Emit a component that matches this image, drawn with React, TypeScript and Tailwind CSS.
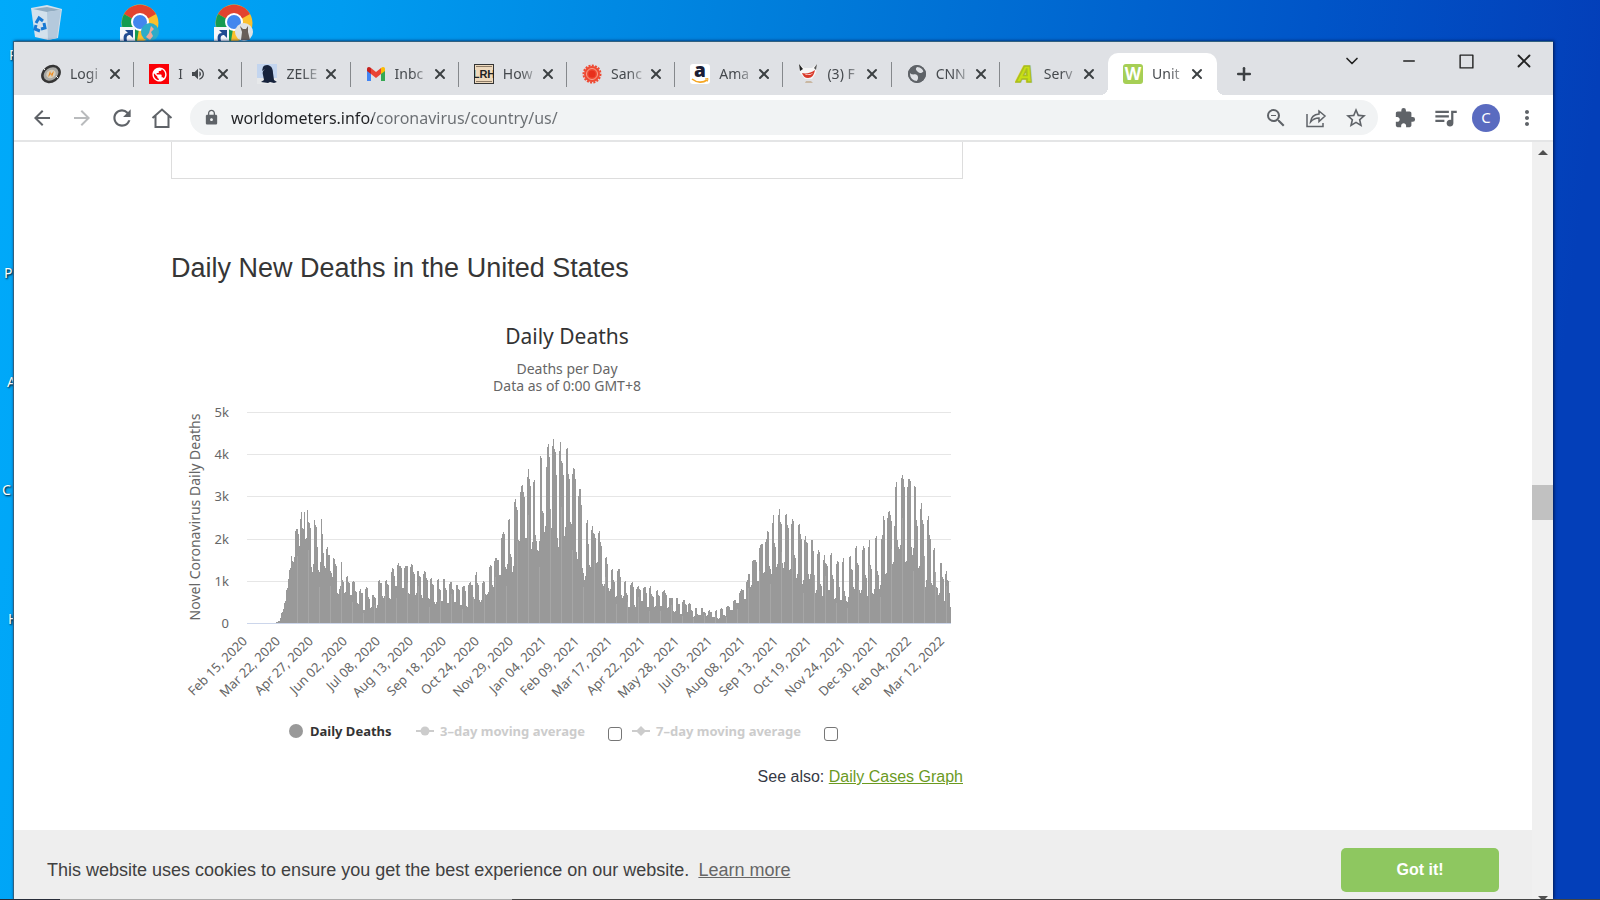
import React from "react";
import clsx from "clsx";
import {
  MdArrowBack,
  MdArrowForward,
  MdExtension,
  MdLock,
  MdMoreVert,
  MdPublic,
  MdQueueMusic,
  MdRefresh,
  MdStarBorder,
  MdVolumeUp,
  MdZoomOut,
} from "react-icons/md";
import { ChevronDown, Minus, Plus, Square, X } from "lucide-react";

// [position on the time axis, thousands of deaths]; the axis runs from 0 to 2112
const SERIES: [number, number][] = [
  [0, 0], [83, 0], [88, 0.03], [97, 0.04], [99, 0.12], [105, 0.26], [110, 0.34], [114, 0.5], [119, 0.8], [124, 1.05],
  [128, 1.28], [131, 1.3], [134, 1.62], [138, 1.45], [141, 1.5], [144, 2.18], [150, 2.23], [154, 2.1], [157, 1.82], [161, 2.5],
  [164, 2.65], [168, 2.2], [172, 2.63], [176, 1.95], [181, 2.68], [185, 2.38], [191, 2.25], [195, 1.2], [199, 1.4], [202, 2.45],
  [207, 2.3], [211, 1.8], [216, 1.2], [219, 1.35], [222, 2.5], [226, 2.1], [229, 1.65], [235, 1.3], [240, 1.8], [247, 1.6],
  [251, 1.2], [256, 1.1], [259, 1.53], [266, 1.4], [272, 0.68], [278, 0.8], [283, 1.45], [287, 1.0], [293, 0.7], [300, 1.12],
  [306, 0.95], [312, 0.65], [319, 1], [327, 0.75], [334, 0.45], [339, 0.8], [346, 0.7], [350, 0.27], [358, 0.85], [365, 0.6],
  [370, 0.35], [377, 0.68], [384, 0.6], [388, 0.35], [395, 1.02], [402, 0.95], [409, 0.6], [417, 1.02], [425, 0.9], [429, 0.55],
  [436, 1.3], [443, 1.1], [447, 0.85], [453, 1.42], [461, 1.35], [468, 0.8], [474, 1.35], [481, 1.35], [486, 0.65], [493, 1.4],
  [500, 1.2], [506, 0.65], [512, 1.25], [520, 1.1], [526, 0.6], [532, 1.23], [540, 1.05], [546, 0.55], [551, 1.07], [559, 0.9],
  [565, 0.45], [573, 1.05], [578, 0.8], [585, 0.5], [590, 1.07], [597, 0.8], [603, 0.45], [610, 0.98], [617, 0.8], [624, 0.48],
  [628, 0.9], [636, 0.8], [641, 0.4], [650, 0.9], [656, 0.75], [660, 0.35], [668, 0.97], [676, 0.9], [681, 0.55], [688, 1.2],
  [694, 0.9], [700, 0.5], [709, 1], [719, 0.65], [731, 1.38], [739, 0.85], [745, 1.55], [753, 1.5], [759, 1.1], [767, 2.15],
  [772, 2.1], [777, 1.25], [786, 2.5], [791, 1.6], [797, 1.2], [803, 2.95], [809, 2.75], [816, 1.9], [824, 3.28], [829, 3.1],
  [837, 1.95], [844, 3.65], [848, 3.4], [853, 1.75], [861, 3.45], [867, 1.95], [874, 1.7], [881, 4.05], [886, 2.65], [893, 2.15],
  [898, 3.7], [904, 4.25], [908, 3.9], [912, 2.15], [918, 4.38], [924, 4.1], [928, 3.5], [934, 1.8], [939, 4.32], [945, 3.8],
  [949, 3.5], [952, 2.05], [959, 4.2], [965, 3.5], [972, 2.3], [979, 3.68], [986, 3.4], [990, 1.45], [998, 3.22], [1003, 2.8],
  [1007, 1.2], [1013, 1], [1020, 2.48], [1025, 1.85], [1029, 1.3], [1036, 2.3], [1042, 2.1], [1049, 1.4], [1056, 2.2], [1061, 1.9],
  [1068, 0.85], [1077, 1.58], [1081, 1.4], [1087, 0.75], [1095, 1.3], [1101, 1], [1106, 0.6], [1115, 1.3], [1120, 1.1], [1126, 0.6],
  [1134, 1], [1139, 0.7], [1146, 0.35], [1154, 0.97], [1160, 0.85], [1164, 0.37], [1172, 0.88], [1179, 0.8], [1185, 0.5], [1193, 0.87],
  [1198, 0.7], [1203, 0.35], [1210, 0.88], [1216, 0.65], [1223, 0.37], [1230, 0.8], [1236, 0.65], [1242, 0.38], [1250, 0.78], [1256, 0.7],
  [1262, 0.35], [1269, 0.6], [1276, 0.6], [1282, 0.25], [1289, 0.6], [1296, 0.45], [1302, 0.2], [1310, 0.55], [1316, 0.45], [1321, 0.27],
  [1327, 0.47], [1334, 0.3], [1339, 0.15], [1347, 0.37], [1354, 0.2], [1359, 0.18], [1365, 0.37], [1372, 0.25], [1379, 0.17], [1386, 0.3],
  [1392, 0.27], [1398, 0.13], [1408, 0.3], [1414, 0.1], [1424, 0.35], [1434, 0.17], [1442, 0.4], [1454, 0.3], [1462, 0.55], [1474, 0.47],
  [1479, 0.75], [1485, 0.8], [1494, 0.55], [1499, 1], [1505, 1.18], [1511, 0.85], [1517, 1.5], [1525, 1.5], [1533, 0.95], [1539, 1.85],
  [1546, 1.87], [1550, 1.15], [1558, 2], [1563, 2.2], [1568, 1.3], [1573, 1.15], [1579, 2.55], [1585, 1.8], [1589, 1.3], [1597, 2.7],
  [1603, 2.35], [1609, 1.3], [1616, 2.6], [1623, 2.3], [1628, 1.2], [1637, 2.5], [1642, 1.6], [1649, 1.05], [1655, 2.38], [1661, 2.1],
  [1666, 0.93], [1675, 2.05], [1681, 1.9], [1687, 1.05], [1694, 2], [1699, 1.7], [1705, 0.7], [1715, 1.75], [1721, 0.9], [1726, 0.65],
  [1732, 1.6], [1738, 1.4], [1746, 0.75], [1752, 1.7], [1757, 1.1], [1763, 0.55], [1772, 1.5], [1777, 0.85], [1782, 0.5], [1789, 1.55],
  [1795, 0.65], [1801, 0.5], [1808, 1.6], [1816, 1.25], [1822, 0.8], [1826, 1.85], [1833, 1.4], [1840, 0.7], [1850, 1.85], [1856, 1.1],
  [1861, 0.65], [1867, 1.97], [1872, 1.3], [1878, 0.65], [1887, 2.1], [1893, 1.15], [1898, 0.8], [1904, 2.05], [1910, 2.55], [1916, 1.1],
  [1925, 2.67], [1930, 2.55], [1937, 1.35], [1942, 2.3], [1948, 3.35], [1953, 1.8], [1959, 1.75], [1964, 3.52], [1970, 3.4], [1976, 1.35],
  [1984, 3.42], [1989, 3.42], [1996, 1.6], [2003, 3.3], [2009, 2.4], [2015, 1.25], [2023, 2.85], [2028, 2.4], [2035, 0.85], [2043, 2.55],
  [2049, 2.05], [2055, 0.85], [2061, 1.8], [2068, 0.85], [2075, 0.65], [2081, 1.45], [2089, 1.05], [2094, 0.45], [2096, 1.25], [2104, 1],
  [2107, 0.7], [2112, 0.35],
];

const DATES = [
  "Feb 15, 2020", "Mar 22, 2020", "Apr 27, 2020", "Jun 02, 2020", "Jul 08, 2020", "Aug 13, 2020",
  "Sep 18, 2020", "Oct 24, 2020", "Nov 29, 2020", "Jan 04, 2021", "Feb 09, 2021", "Mar 17, 2021",
  "Apr 22, 2021", "May 28, 2021", "Jul 03, 2021", "Aug 08, 2021", "Sep 13, 2021", "Oct 19, 2021",
  "Nov 24, 2021", "Dec 30, 2021", "Feb 04, 2022", "Mar 12, 2022",
];

const PLOT_LEFT = 76;
const PLOT_WIDTH = 704;
const BASE = 219;
const PLOT_HEIGHT = 211;

const toPx = (k: number) => Math.round((k * PLOT_HEIGHT) / 5);

function valueAt(t: number) {
  let i = 0;
  while (i < SERIES.length - 2 && SERIES[i + 1][0] <= t) i++;
  const [x0, v0] = SERIES[i];
  const [x1, v1] = SERIES[i + 1];
  const f = (t - x0) / (x1 - x0);
  const near = f < 0.5 ? v0 : v1;
  return near * 0.75 + (v0 + (v1 - v0) * f) * 0.25;
}

const BARS = Array.from({ length: PLOT_WIDTH }, (_, i) => {
  const h = toPx(valueAt(i * 3 + 1));
  return h > 0 ? `M${PLOT_LEFT + i} ${BASE}v${-h}h1v${h}z` : "";
}).join("");

const chartFont = "font-['Noto_Sans','Open_Sans',sans-serif]";
const uiFont = "font-['Noto_Sans','Open_Sans',sans-serif]";

function DeathsChart() {
  return (
    <svg viewBox="0 0 792 306" className={clsx("block w-full", chartFont)} role="img" aria-label="Daily Deaths">
      {[0, 1, 2, 3, 4, 5].map((k) => (
        <g key={k}>
          <rect x={PLOT_LEFT} y={BASE - toPx(k)} width={PLOT_WIDTH} height="1" fill={k ? "#e6e6e6" : "#ccd6eb"} />
          <text x="58" y={BASE - toPx(k) + 5} textAnchor="end" fontSize="13" fill="#666">
            {k ? `${k}k` : "0"}
          </text>
        </g>
      ))}
      <path d={BARS} fill="#999" shapeRendering="crispEdges" />
      <g stroke="#a6a6a6" strokeWidth="1" shapeRendering="crispEdges">
        {Array.from({ length: 60 }, (_, i) => {
          const t = 150 + i * 33;
          return <line key={i} x1={PLOT_LEFT + t / 3} x2={PLOT_LEFT + t / 3} y1={BASE} y2={BASE - valueAt(t) * 30} />;
        })}
      </g>
      <text transform="translate(29 113) rotate(-90)" textAnchor="middle" fontSize="14" fill="#666">
        Novel Coronavirus Daily Deaths
      </text>
      {DATES.map((d, i) => (
        <text
          key={d}
          transform={`translate(${77 + Math.round(i * 33.2)} 238) rotate(-45)`}
          textAnchor="end"
          fontSize="13"
          fill="#666"
        >
          {d}
        </text>
      ))}
    </svg>
  );
}

const icons: Record<string, React.ReactNode> = {
  login: (
    <svg viewBox="0 0 20 20" className="size-5">
      <g transform="rotate(-35 10 10)">
        <ellipse cx="10" cy="10" rx="10.500" ry="8.500" fill="#353535" />
        <ellipse cx="10" cy="10" rx="8" ry="6" fill="#a9a9a5" />
        <ellipse cx="10" cy="10" rx="5" ry="4" fill="#d8cdb8" />
      </g>
      <path d="M7 13l2-6 1 3 3-3-2 6-1-3z" fill="#ef8a1d" />
      <path d="M2 4l2 2M17 14l-2-2" stroke="#eee" />
    </svg>
  ),
  globe: (
    <span className="flex size-5 items-center justify-center bg-[#fb0006]">
      <MdPublic size={17} className="text-white" />
    </span>
  ),
  eagle: (
    <svg viewBox="0 0 20 20" className="size-5">
      <rect width="20" height="14" fill="#c3d5ef" />
      <rect y="14" width="20" height="6" fill="#e6e8ea" />
      <path d="M6 3c1-2 5-3 7-1 2 1 3 4 3 7l1 7 3 2-3 1-4-1-2 1-7-1 3-2-1-5c-1-4 1-5 2-6l-3 2z" fill="#17233c" />
    </svg>
  ),
  gmail: (
    <svg viewBox="0 0 20 16" className="w-5">
      <path d="M1 3v12h4V7z" fill="#4285f4" />
      <path d="M15 7v8h4V3z" fill="#34a853" />
      <path d="M15 3v5l4-3V3c0-2-2-3-4-1z" fill="#fbbc04" />
      <path d="M5 2v6l5 4 5-4V2l-5 4z" fill="#ea4335" />
      <path d="M1 3v2l4 3V2C3 0 1 1 1 3z" fill="#c5221f" />
    </svg>
  ),
  lrh: (
    <svg viewBox="0 0 20 20" className="size-5">
      <rect x="0.5" y="0.5" width="19" height="19" fill="#eed9bd" stroke="#333" />
      <path d="M2 2.500h16M2 17.500h16" stroke="#8d7b66" />
      <text
        x="10"
        y="14"
        fontSize="11"
        fontWeight="700"
        textAnchor="middle"
        fill="#222"
        className="font-['Liberation_Sans_Narrow','Liberation_Sans',sans-serif]"
      >
        LRH
      </text>
    </svg>
  ),
  sun: (
    <svg viewBox="0 0 20 20" className="size-5">
      <circle cx="10" cy="10" r="8.500" fill="none" stroke="#ee4a33" strokeWidth="2" strokeDasharray="2 1.3" />
      <circle cx="10" cy="10" r="8" fill="#ee4a33" />
      <circle cx="10" cy="10" r="5.500" fill="none" stroke="#fab9a4" strokeWidth="0.8" />
      <circle cx="10" cy="10" r="3.500" fill="#e8301c" />
    </svg>
  ),
  amazon: (
    <svg viewBox="0 0 20 20" className="size-5">
      <rect width="20" height="20" rx="3" fill="#fff" />
      <text x="10" y="13" fontSize="19" fontWeight="800" textAnchor="middle" fill="#1b1d35" className="font-['Open_Sans',sans-serif]">
        a
      </text>
      <path d="M2 15c5 4 11 4 15 1" fill="none" stroke="#f5a623" strokeWidth="1.6" />
      <path d="M15 15l3-.5-.6 3" fill="none" stroke="#f5a623" />
    </svg>
  ),
  cat: (
    <svg viewBox="0 0 20 20" className="size-5">
      <path d="M1 0l5 4h8l5-4-1 9-4 6H7L2 9z" fill="#f6f6f6" />
      <path d="M1 0l4 5-3 2z" fill="#222" />
      <path d="M19 0l-3 4 2 2z" fill="#555" />
      <path d="M4 9c4 1 9 0 13-3-1 5-3 8-7 8-3 0-5-2-6-5z" fill="#d93a2b" />
      <path d="M7 10c3 1 6 0 8-1-1 2-7 3-8 1z" fill="#fff" />
      <path d="M7 19l1-2h5l2 2z" fill="#c9b8a3" />
    </svg>
  ),
  world: (
    <svg viewBox="0 0 20 20" className="size-5">
      <circle cx="10" cy="10" r="9" fill="#5f6368" />
      <path d="M3 9c3 3 5 0 7 2s1 5-1 7c-4-1-7-4-6-9zM10 3c3-1 6 1 7 4-2 2-4 3-6 1s-3-3-1-5z" fill="#dfe1e5" />
      <circle cx="10" cy="10" r="8" fill="none" stroke="#5f6368" strokeWidth="2" />
    </svg>
  ),
  letterA: (
    <svg viewBox="0 0 20 20" className="size-5">
      <text
        x="10"
        y="18"
        fontSize="23"
        fontWeight="800"
        fontStyle="italic"
        textAnchor="middle"
        fill="#c8df13"
        stroke="#a9bd22"
        strokeWidth="1.500"
        className="font-['Open_Sans',sans-serif]"
      >
        A
      </text>
    </svg>
  ),
  wom: (
    <svg viewBox="0 0 20 20" className="size-5">
      <rect width="20" height="20" rx="3" fill="#a6cf55" />
      <text x="10" y="16" fontSize="17" fontWeight="700" textAnchor="middle" fill="#fff" className="font-['Noto_Sans',sans-serif]">
        W
      </text>
    </svg>
  ),
};

const TABS = [
  { icon: "login", title: "Logi" },
  { icon: "globe", title: "I", audio: true },
  { icon: "eagle", title: "ZELE" },
  { icon: "gmail", title: "Inbc" },
  { icon: "lrh", title: "How" },
  { icon: "sun", title: "Sanc" },
  { icon: "amazon", title: "Ama" },
  { icon: "cat", title: "(3) F" },
  { icon: "world", title: "CNN" },
  { icon: "letterA", title: "Serv" },
  { icon: "wom", title: "Unit", active: true },
];

function Tab({ icon, title, audio, active }: { icon: string; title: string; audio?: boolean; active?: boolean }) {
  return (
    <div
      className={clsx(
        "relative flex h-[42px] items-center pl-[15px]",
        active ? "w-[109px] shrink-0 rounded-t-[10px] bg-white" : "min-w-0 flex-1"
      )}
    >
      {active && (
        <>
          <span className="absolute bottom-0 -left-2 size-2 bg-[radial-gradient(circle_at_0_0,transparent_8px,#fff_8px)]" />
          <span className="absolute bottom-0 -right-2 size-2 bg-[radial-gradient(circle_at_100%_0,transparent_8px,#fff_8px)]" />
        </>
      )}
      <span className="flex size-5 shrink-0 items-center justify-center">{icons[icon]}</span>
      <span
        className={clsx(
          "ml-[9px] whitespace-nowrap text-[14px] leading-5 text-[#45494d] [mask-image:linear-gradient(90deg,#000_50%,rgba(0,0,0,0.2))]",
          audio ? "w-[6px]" : "w-[34px]"
        )}
      >
        {title}
      </span>
      {audio && <MdVolumeUp size={16} className="ml-[6px] shrink-0 text-[#45494d]" />}
      <button aria-label="Close tab" className={clsx("shrink-0 text-[#3c4043]", audio ? "ml-[9px]" : "ml-[3px]")}>
        <X size={16} strokeWidth={3} />
      </button>
    </div>
  );
}

function TabStrip() {
  return (
    <div className="flex h-[53px] shrink-0 items-end bg-[#dfe1e5]">
      <div className="ml-[12px] flex w-full max-w-[1191px] items-center">
        {TABS.map((t, i) => (
          <React.Fragment key={t.icon}>
            <Tab {...t} />
            {i < TABS.length - 2 && <span className="-ml-px h-[25px] w-px shrink-0 bg-[#85888c]" />}
          </React.Fragment>
        ))}
      </div>
      <button aria-label="New tab" className="mb-[11px] ml-[17px] text-[#3c4043]">
        <Plus size={20} strokeWidth={3} />
      </button>
      <div className="ml-auto flex shrink-0 self-start pt-[9px] text-[#222]">
        <button aria-label="Search tabs" className="flex h-5 w-[57px] items-center justify-center">
          <ChevronDown size={20} strokeWidth={2} />
        </button>
        <button aria-label="Minimize" className="flex h-5 w-[58px] items-center justify-center">
          <Minus size={18} strokeWidth={2} />
        </button>
        <button aria-label="Maximize" className="flex h-5 w-[57px] items-center justify-center">
          <Square size={17} strokeWidth={2} className="[&_rect]:[rx:0]" />
        </button>
        <button aria-label="Close" className="flex h-5 w-[58px] items-center justify-center">
          <X size={22} strokeWidth={2} />
        </button>
      </div>
    </div>
  );
}

function Toolbar() {
  return (
    <div className="flex h-[47px] shrink-0 items-center border-b-2 border-[#e4e5e6] bg-white pr-[14px] pl-[16px] text-[#5f6368]">
      <div className="flex gap-4">
        <button aria-label="Back"><MdArrowBack size={24} /></button>
        <button aria-label="Forward" className="text-[#b9bbbd]"><MdArrowForward size={24} /></button>
        <button aria-label="Reload"><MdRefresh size={26} className="-mx-px" /></button>
        <button aria-label="Home">
          <svg viewBox="0 0 24 24" className="size-6" fill="none" stroke="currentColor" strokeWidth="2">
            <path d="M2.500 12L12 3.500 21.500 12M5.500 10v11h13V10" />
          </svg>
        </button>
      </div>
      <div className="ml-[16px] flex h-[35px] flex-1 items-center rounded-full bg-[#f1f3f4] pr-[10px] pl-[13px]">
        <MdLock size={17} />
        <label htmlFor="address" className="sr-only">Address</label>
        <div className="ml-[11px] h-6 flex-1 text-[16px] leading-6">
          <input
            id="address"
            defaultValue="worldometers.info/coronavirus/country/us/"
            className="w-full bg-transparent bg-clip-text text-transparent outline-none [background-image:linear-gradient(90deg,#202124_142px,#6a6e72_142px)]"
          />
        </div>
        <div className="flex gap-4">
          <button aria-label="Zoom"><MdZoomOut size={24} /></button>
          <button aria-label="Share">
            <svg viewBox="0 0 24 24" className="size-6" fill="none" stroke="currentColor" strokeWidth="1.500">
              <path d="M3 8v12.500h16V17M15 5l6 5-6 5.500V12c-4 0-6 1-8.500 4C7 11.500 10 8.500 15 8z" />
            </svg>
          </button>
          <button aria-label="Bookmark"><MdStarBorder size={24} /></button>
        </div>
      </div>
      <div className="ml-[16px] flex items-center">
        <button aria-label="Extensions"><MdExtension size={22} /></button>
        <button aria-label="Media controls" className="ml-[16px]"><MdQueueMusic size={27} /></button>
        <button className="ml-[13px] flex size-7 items-center justify-center rounded-full bg-[#5a6bc0] text-[15px] text-white">
          C
        </button>
        <button aria-label="Menu" className="ml-[15px]"><MdMoreVert size={24} /></button>
      </div>
    </div>
  );
}

function LegendMarker({ diamond }: { diamond?: boolean }) {
  return (
    <svg viewBox="0 0 18 10" className="h-[10px] w-[18px] shrink-0" fill="#ccc">
      <rect y="4" width="18" height="2" />
      {diamond ? <path d="M9 0l5 5-5 5-5-5z" /> : <circle cx="9" cy="5" r="4.500" />}
    </svg>
  );
}

function Legend() {
  return (
    <div className={clsx("mt-2 flex items-center pt-[3px] pl-[118px] text-[13px] leading-5 font-bold text-[#ccc]", chartFont)}>
      <span className="size-[14px] shrink-0 rounded-full bg-[#999]" />
      <span className="ml-[7px] w-[106px] text-[#333]">Daily Deaths</span>
      <LegendMarker />
      <label htmlFor="avg3" className="ml-[6px] w-[168px]">3–day moving average</label>
      <input id="avg3" type="checkbox" className="mt-[5px] size-[14px] appearance-none rounded-[3px] border border-[#767676] bg-white" />
      <span className="ml-[10px] flex"><LegendMarker diamond /></span>
      <label htmlFor="avg7" className="ml-[6px] w-[168px]">7–day moving average</label>
      <input id="avg7" type="checkbox" className="mt-[5px] size-[14px] appearance-none rounded-[3px] border border-[#767676] bg-white" />
    </div>
  );
}

function Page() {
  return (
    <div className="flex min-h-0 flex-1 bg-white font-['Liberation_Sans',Arial,sans-serif]">
      <div className="flex min-w-0 flex-1 flex-col">
        <main className="min-h-0 flex-1 overflow-hidden pl-[157px]">
          <div className="max-w-[792px]">
            <div className="h-[37px] border-x border-b border-[#ddd]" />
            <h2 className="mt-[73px] text-[27px] leading-8 text-[#363636]">Daily New Deaths in the United States</h2>
            <section className={clsx("mt-[38px] text-center", chartFont)}>
              <h3 className="text-[21px] leading-[28px] text-[#333]">Daily Deaths</h3>
              <p className="mt-[10px] text-[14px] leading-[17px] text-[#666]">
                Deaths per Day
                <br />
                Data as of 0:00 GMT+8
              </p>
            </section>
            <div className="mt-[10px]">
              <DeathsChart />
            </div>
            <Legend />
            <p className="mt-[24px] text-right text-[16px] leading-6 text-[#363945]">
              See also: <a href="#cases" className="text-[#6b9a1f] underline">Daily Cases Graph</a>
            </p>
          </div>
        </main>
        <div className="flex h-[69px] shrink-0 items-start bg-[#eee] px-[33px] text-[18px] leading-7 text-[#404040]">
          <p className="mt-[26px]">
            This website uses cookies to ensure you get the best experience on our website.
            <a href="#learn" className="ml-[9px] text-[#666] underline">Learn more</a>
          </p>
          <button className="mt-[18px] ml-auto h-11 w-[158px] rounded-[5px] bg-[#8ec760] text-[16px] font-bold text-white">
            Got it!
          </button>
        </div>
      </div>
      <div className="flex w-[21px] shrink-0 flex-col items-center bg-[#f0f0f0]">
        <svg viewBox="0 0 10 5" className="mt-[8px] w-[10px]" fill="#505050"><path d="M0 5l5-5 5 5z" /></svg>
        <div className="mt-[330px] h-[35px] w-full bg-[#c1c1c1]" />
        <svg viewBox="0 0 10 5" className="mt-auto -mb-[2px] w-[10px]" fill="#505050"><path d="M0 0l5 5 5-5z" /></svg>
      </div>
    </div>
  );
}

function ChromeShortcut({ cat }: { cat?: boolean }) {
  return (
    <svg viewBox="0 0 40 40" className="size-10">
      <circle cx="20" cy="20" r="18.500" fill="#fbc02d" />
      <path d="M20 20L4 11A18.500 18.500 0 0 1 36 11z" fill="#e2432f" />
      <path d="M20 20L4 11a18.500 18.500 0 0 0 13 27z" fill="#159b51" />
      <circle cx="20" cy="19" r="9" fill="#fff" />
      <circle cx="20" cy="19" r="7" fill="#4287ee" />
      <rect y="24" width="15" height="16" fill="#f5f7fa" />
      <path d="M4 38c-1-5 0-8 4-8l-3-3h8v8l-3-3c-3 0-4 2-3 6z" fill="#1f4c91" />
      <circle cx="30" cy="29" r="9" fill={cat ? "#dfe3e4" : "#2cacc9"} />
      {cat ? (
        <path d="M26 23l3 3h3l2-3v6l2 8h-9l1-8z" fill="#685f58" />
      ) : (
        <path d="M31 23l3 3-3 3 2 4-3 4-4-3 3-4z" fill="#ecaa9a" />
      )}
    </svg>
  );
}

function DesktopIcons() {
  return (
    <>
      <svg viewBox="0 0 32 36" className="absolute top-[5px] left-[31px] w-8">
        <path d="M0 3l16-3 15 4-4 29-10 2-13-3z" fill="#d3e1ec" />
        <path d="M2 4l14 3 14-2-14-3z" fill="#91abc0" />
        <path d="M16 7l14-2-4 28-9 2z" fill="#b4c9dc" />
        <path d="M5 18l3-5 4 3M13 18l1 5-4 1M9 26l-5-2 1-4" fill="none" stroke="#1879d3" strokeWidth="3" />
      </svg>
      <span className="absolute top-[3px] left-[120px]"><ChromeShortcut /></span>
      <span className="absolute top-[3px] left-[214px]"><ChromeShortcut cat /></span>
      <div className="text-[14px] leading-5 text-white [text-shadow:1px_1px_2px_#000]">
        <span className="absolute top-[45px] left-[9px]">R</span>
        <span className="absolute top-[263px] left-[4px]">P</span>
        <span className="absolute top-[372px] left-[7px]">A</span>
        <span className="absolute top-[480px] left-[2px]">C</span>
        <span className="absolute top-[609px] left-[8px]">H</span>
      </div>
    </>
  );
}

export default function App() {
  return (
    <div
      className={clsx(
        "relative flex h-screen flex-col overflow-hidden bg-[linear-gradient(97deg,#00aafa_0%,#009cf0_20%,#007cda_47%,#0055c8_77%,#033fb9_94%)]",
        uiFont
      )}
    >
      <DesktopIcons />
      <div className="relative mt-[41px] mr-[47px] ml-[13px] flex min-h-0 flex-1 flex-col border-t border-l border-[#31607f] shadow-[1px_0_3px_#001a50]">
        <TabStrip />
        <Toolbar />
        <Page />
      </div>
      <div className="relative flex h-px shrink-0 bg-[#aaa]">
        <span className="w-[60px] bg-[#272c38]" />
        <span className="ml-auto w-[68%] bg-[#444]" />
      </div>
    </div>
  );
}
